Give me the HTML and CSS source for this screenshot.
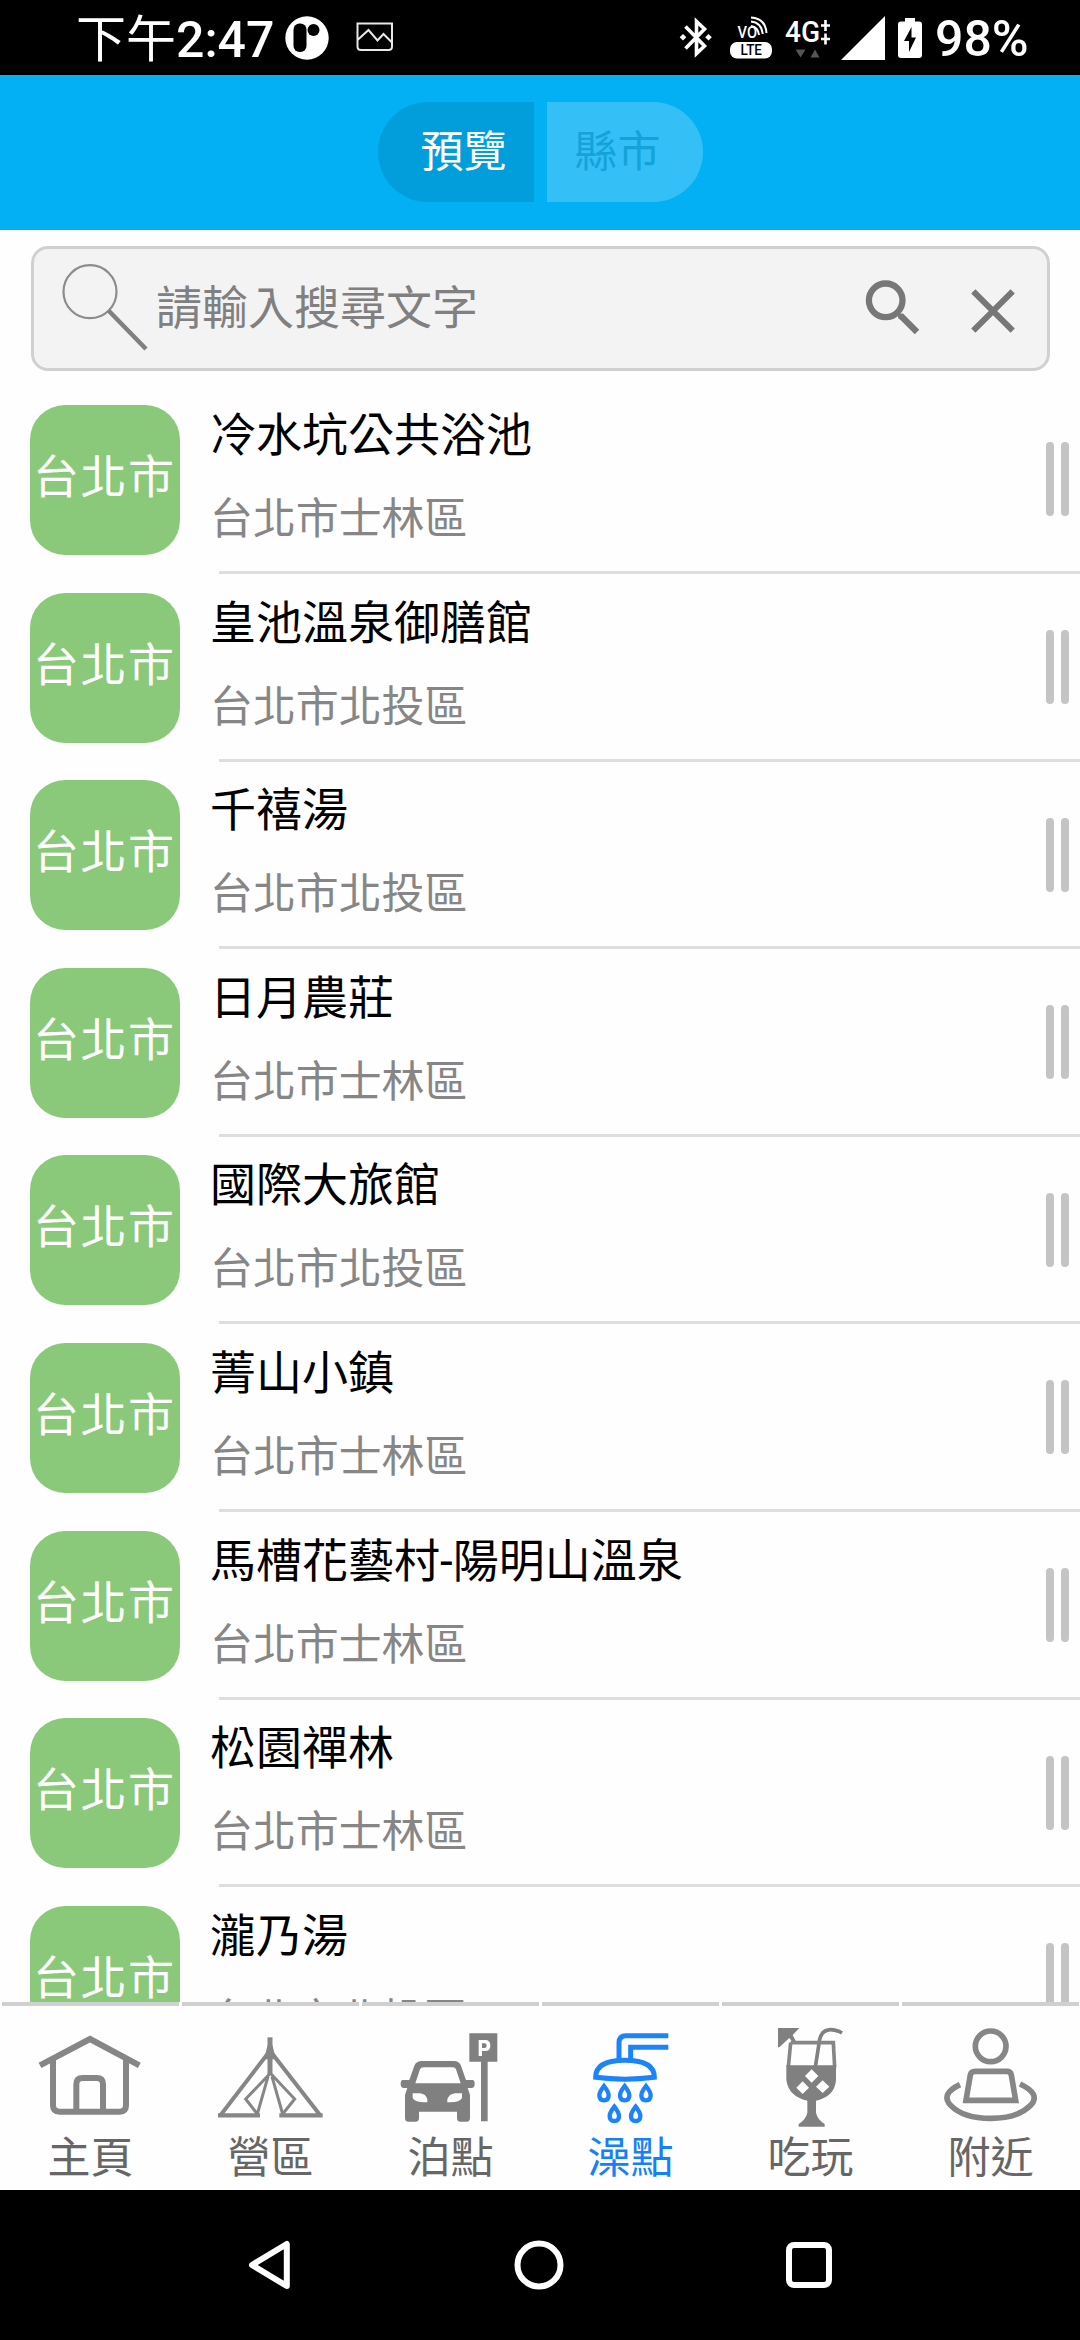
FILE: index.html
```html
<!DOCTYPE html>
<html lang="zh-Hant">
<head>
<meta charset="utf-8">
<title>澡點</title>
<link rel="stylesheet" href="styles.css">
</head>
<body>
<div class="screen">
  <div class="status">
    <span class="clock">下午<b>2:47</b></span>
    <svg class="st-app" width="44" height="46" viewBox="0 0 44 46"><circle cx="22" cy="23" r="21.700" fill="#fff"/><rect x="8.500" y="8.500" width="13" height="28.500" rx="6" fill="#000"/><circle cx="28.500" cy="15" r="6" fill="#000"/></svg>
    <svg class="st-pic" width="38" height="30" viewBox="0 0 38 30"><path d="M1.500 1.500H36V24.500Q36 28 32.500 28H5Q1.500 28 1.500 24.500ZM1.500 18L12.500 8L21.500 18.500L27.500 12L36 20.500" fill="none" stroke="#e8e8e8" stroke-width="2"/></svg>
    <svg class="st-bt" width="34" height="42" viewBox="0 0 34 42"><path d="M6.500 9.500L25.500 29L17.500 36.500V4.500L25.500 12L6.500 31.500" fill="none" stroke="#fff" stroke-width="3.600"/><path d="M4 17l3.300 3.300l-3.300 3.300l-3.300-3.300zM29.500 17l3.300 3.300l-3.300 3.300l-3.300-3.300z" fill="#fff"/></svg>
    <svg class="st-volte" width="42" height="44" viewBox="0 0 42 44"><text x="7.500" y="22.800" class="vo" textLength="19.500" lengthAdjust="spacingAndGlyphs">VO</text><path d="M21 11Q28 12 29 20M21 6.500Q31.500 7.500 32.800 19M21 2.500Q35.500 3.500 36.500 18" fill="none" stroke="#fff" stroke-width="2"/><rect y="27" width="42" height="16.500" rx="7" fill="#fff"/><text x="10.500" y="40" class="lte" textLength="21.500" lengthAdjust="spacingAndGlyphs">LTE</text></svg>
    <svg class="st-4g" width="46" height="42" viewBox="0 0 46 42"><text x="0" y="23.500" class="g4" textLength="35" lengthAdjust="spacingAndGlyphs">4G</text><path d="M40.500 2V13M36 7.500H45M40.500 15.500V26.500M36 21H45" stroke="#fff" stroke-width="2.600"/><path d="M10.500 31.500H20.500L15.500 39.500ZM25.500 39.500H34.500L30 31.500Z" fill="#555"/></svg>
    <svg class="st-sig" width="44" height="44" viewBox="0 0 44 44"><path d="M0 44L44 0V44Z" fill="#fff"/></svg>
    <svg class="st-bat" width="24" height="40" viewBox="0 0 24 40"><path d="M7 0H17V3.500H21Q24 3.500 24 6.500V37Q24 40 21 40H3Q0 40 0 37V6.500Q0 3.500 3 3.500H7Z" fill="#fff"/><path d="M13.500 9L6 23H11V34L18 19.500H13.500Z" fill="#000"/></svg>
    <b class="pct">98%</b>
  </div>

  <header class="header">
    <div class="seg seg-on">預覽</div>
    <div class="seg seg-off">縣市</div>
  </header>

  <main class="content">
    <div class="search">
      <svg class="lens" width="62" height="62" viewBox="0 0 62 62"><circle cx="28" cy="27.700" r="26.500" fill="none" stroke="#8c8c8c" stroke-width="2.200"/><path d="M46.500 46.500L84 85" stroke="#808080" stroke-width="4.500"/></svg>
      <span class="hint">請輸入搜尋文字</span>
      <svg class="find" width="56" height="58" viewBox="0 0 56 58"><circle cx="21.700" cy="21.300" r="16.800" fill="none" stroke="#777" stroke-width="6.300"/><path d="M36.500 36.500L53 53" stroke="#777" stroke-width="6.300"/><circle cx="37" cy="37.500" r="3" fill="#777"/></svg>
      <svg class="clear" width="44" height="44" viewBox="0 0 44 44"><path d="M2.300 2.300L41.700 41.700M41.700 2.300L2.300 41.700" stroke="#777" stroke-width="6"/></svg>
    </div>
    <div class="list">
      <div class="row"><div class="badge">台北市</div><div class="info"><div class="name">冷水坑公共浴池</div><div class="area">台北市士林區</div></div><div class="grip"></div></div>
      <div class="row"><div class="badge">台北市</div><div class="info"><div class="name">皇池溫泉御膳館</div><div class="area">台北市北投區</div></div><div class="grip"></div></div>
      <div class="row"><div class="badge">台北市</div><div class="info"><div class="name">千禧湯</div><div class="area">台北市北投區</div></div><div class="grip"></div></div>
      <div class="row"><div class="badge">台北市</div><div class="info"><div class="name">日月農莊</div><div class="area">台北市士林區</div></div><div class="grip"></div></div>
      <div class="row"><div class="badge">台北市</div><div class="info"><div class="name">國際大旅館</div><div class="area">台北市北投區</div></div><div class="grip"></div></div>
      <div class="row"><div class="badge">台北市</div><div class="info"><div class="name">菁山小鎮</div><div class="area">台北市士林區</div></div><div class="grip"></div></div>
      <div class="row"><div class="badge">台北市</div><div class="info"><div class="name">馬槽花藝村<span class="latin">-</span>陽明山溫泉</div><div class="area">台北市士林區</div></div><div class="grip"></div></div>
      <div class="row"><div class="badge">台北市</div><div class="info"><div class="name">松園禪林</div><div class="area">台北市士林區</div></div><div class="grip"></div></div>
      <div class="row"><div class="badge">台北市</div><div class="info"><div class="name">瀧乃湯</div><div class="area">台北市北投區</div></div><div class="grip"></div></div>
    </div>
  </main>

  <nav class="tabs">
    <div class="tab">
      <svg viewBox="0 78 540 348"><g fill="none" stroke="#868686" stroke-width="18"><path d="M120 256L270 177L418 256M159 240V376Q159 395 178 395H360Q378 395 378 376V240"/><path d="M229 395V313Q229 294 248 294H290Q309 294 309 313V395"/></g></svg>
      <span>主頁</span>
    </div>
    <div class="tab">
      <svg viewBox="540 78 540 348"><g fill="none" stroke="#868686"><path stroke-width="15" d="M810 172V285"/><path stroke-width="12" d="M810 212L662 405M810 212L960 405"/><path stroke-width="9" d="M808 283L737 357L772 402L804 290M814 283L884 357L848 402L816 290"/><path stroke-width="13" d="M654 406H780M838 406H968"/></g><path fill="#868686" d="M803 195H817L828 238H792Z"/></svg>
      <span>營區</span>
    </div>
    <div class="tab">
      <svg viewBox="0 78 540 348"><path fill="#808080" fill-rule="evenodd" d="M328 160H412V245H383V424H363V245H328ZM356 180V228H366V213H376Q391 213 391 197Q391 180 376 180ZM366 190H374Q380 190 380 197Q380 204 374 204H366Z"/><path fill="#808080" fill-rule="evenodd" d="M185 243H282Q297 243 303 257L318 300H338Q344 300 344 312Q344 324 334 324H323L330 345V414Q330 425 320 425H301Q291 425 291 414V395H177V414Q177 425 167 425H145Q135 425 135 414V345L142 324H132Q122 324 122 312Q122 300 128 300H148L163 257Q169 243 185 243ZM191 262Q182 262 180 268L166 310H302L288 268Q286 262 278 262ZM158 340V354Q166 367 193 367H202V358Q198 342 180 340ZM306 340V354Q298 367 272 367H262V358Q267 342 285 340Z"/></svg>
      <span>泊點</span>
    </div>
    <div class="tab tab-on">
      <svg viewBox="540 78 540 348"><g fill="none" stroke="#1c84fb" stroke-width="15"><path d="M925 167H798Q777 167 777 188V242M925 202H812V242"/><path d="M707 292Q707 241 795 241Q883 241 883 292Q795 303 707 292Z"/></g><g fill="none" stroke="#1c84fb" stroke-width="13"><path id="drop" d="M732 318Q718 336 718 346Q718 361 732 361Q746 361 746 346Q746 336 732 318Z"/><use href="#drop" x="62"/><use href="#drop" x="126"/><use href="#drop" x="31" y="62"/><use href="#drop" x="95" y="62"/></g></svg>
      <span>澡點</span>
    </div>
    <div class="tab">
      <svg viewBox="0 78 540 348"><path fill="#808080" d="M174 144H238L218 165L232 192H222L208 174L178 202H174Z"/><path fill="none" stroke="#808080" stroke-width="11" d="M285 268L299 178Q306 149 332 149Q350 149 366 159"/><path fill="none" stroke="#868686" stroke-width="11" d="M212 188H340L344 262M212 188L205 262"/><path fill="#808080" fill-rule="evenodd" d="M199 256H348V300Q344 350 288 362V398Q292 418 314 432V440H236V432Q258 418 262 398V362Q206 350 199 300ZM275 268L255 288L275 308L295 288ZM248 304L229 323L248 342L267 323ZM308 301L288 320L308 339L328 320Z"/></svg>
      <span>吃玩</span>
    </div>
    <div class="tab">
      <svg viewBox="540 78 540 348"><g fill="none" stroke="#868686" stroke-width="17"><circle cx="812" cy="199" r="46"/><path d="M766 274H860Q872 274 874 285L887 361H738L751 285Q753 274 766 274Z"/><path d="M720 314Q660 342 692 376Q730 415 812 415Q894 415 932 376Q964 342 900 312"/></g></svg>
      <span>附近</span>
    </div>
  </nav>

  <div class="sysnav">
    <svg width="44" height="50" viewBox="0 0 44 50"><path d="M38.800 4V46L4 25Z" fill="none" stroke="#fff" stroke-width="6" stroke-linejoin="round"/></svg>
    <svg width="50" height="50" viewBox="0 0 50 50"><circle cx="25" cy="25" r="21.500" fill="none" stroke="#fff" stroke-width="6"/></svg>
    <svg width="46" height="46" viewBox="0 0 46 46"><rect x="3" y="3" width="40" height="40" rx="5" fill="none" stroke="#fff" stroke-width="6"/></svg>
  </div>
</div>
</body>
</html>
```
FILE: styles.css
```css
* { box-sizing: border-box; }
body {
  margin: 0;
  background: #000;
  font-family: "Noto Sans CJK TC", sans-serif;
}
svg { display: block; flex: none; }
.screen {
  width: 1080px;
  height: 2340px;
  display: flex;
  flex-direction: column;
  overflow: hidden;
}

/* status bar */
.status {
  height: 75px;
  flex: none;
  display: flex;
  align-items: flex-start;
  background: #000;
  color: #fff;
}
.clock {
  width: 209px;
  margin-left: 76px;
  font-size: 50px;
  line-height: 70px;
  white-space: nowrap;
}
.status b {
  font-family: Roboto, "Noto Sans CJK TC", sans-serif;
  font-weight: 500;
}
.st-app { margin-top: 15px; }
.st-pic { margin: 22px 0 0 27px; }
.st-bt { margin: 17px 0 0 285px; }
.st-volte { margin: 15px 0 0 17px; }
.st-4g { margin: 18px 0 0 13px; }
.st-sig { margin: 16px 0 0 10px; }
.st-bat { margin: 18px 0 0 13px; }
.pct {
  margin: 4px 0 0 13px;
  font-size: 50px;
  line-height: 70px;
}
.vo { font: 500 16.500px Roboto, sans-serif; fill: #fff; }
.lte { font: 500 14px Roboto, sans-serif; fill: #000; }
.g4 { font: 500 30px Roboto, sans-serif; fill: #fff; }

/* header with the two-way switch */
.header {
  height: 155px;
  flex: none;
  display: flex;
  justify-content: center;
  gap: 13px;
  padding-top: 27px;
  background: #02b0f3;
}
.seg {
  width: 156px;
  height: 100px;
  font-size: 43px;
  line-height: 92px;
}
.seg-on {
  padding-left: 43px;
  border-radius: 54px 0 0 54px;
  background: #019edb;
  color: #fff;
}
.seg-off {
  padding-left: 28px;
  border-radius: 0 54px 54px 0;
  background: #34c0f6;
  color: #13a3d8;
}

/* search and list */
.content {
  height: 1772px;
  flex: none;
  display: flex;
  flex-direction: column;
  overflow: hidden;
  padding-top: 16px;
  background: #fefefe;
}
.search {
  height: 125px;
  flex: none;
  display: flex;
  margin: 0 30px 0 31px;
  border: 3px solid #d0d0d0;
  border-radius: 17px;
  background: #f3f3f3;
  color: #808080;
}
.lens { margin: 15px 0 0 28px; overflow: visible; }
.hint {
  width: 708px;
  margin-left: 32px;
  font-size: 46px;
  line-height: 110px;
}
.find { margin: 30px 0 0 0; }
.clear { margin: 40px 0 0 51px; }
.list { padding-top: 15.400px; }
.row {
  height: 187.600px;
  display: flex;
  padding-left: 30px;
}
.badge {
  width: 150px;
  height: 150px;
  flex: none;
  margin-top: 18.600px;
  padding-left: 3px;
  border-radius: 35px;
  background: #8ac97a;
  color: #fff;
  font-size: 46px;
  letter-spacing: 1.500px;
  line-height: 136px;
  white-space: nowrap;
}
.info {
  flex: 1;
  height: 100%;
  margin-left: 39px;
  padding-top: 14.600px;
  border-bottom: 3px solid #dedede;
}
.name {
  font-size: 46px;
  line-height: 60px;
  margin-left: -9px;
  color: #000;
}
.latin {
  font-family: Roboto, sans-serif;
  line-height: 1;
}
.area {
  margin: 24px 0 0 -9px;
  font-size: 42.900px;
  line-height: 60px;
  color: #868686;
}
.grip {
  width: 34px;
  height: 100%;
  padding-top: 56px;
  border-bottom: 3px solid #dedede;
}
.grip::before,
.grip::after {
  content: "";
  float: left;
  width: 8px;
  height: 74px;
  margin-right: 7px;
  border-radius: 4px;
  background: #c4c4c4;
}
.grip::after { margin-right: 0; }

/* bottom tabs */
.tabs {
  height: 188px;
  flex: none;
  display: grid;
  grid-template-columns: repeat(6, 180px);
  background: #fefefe;
}
.tab {
  margin: 0 1px 0 2px;
  border-top: 4px solid #d0d0d0;
  color: #666;
  font-size: 43px;
  text-align: center;
}
.tab svg {
  width: 180px;
  height: 116px;
  margin-left: -2px;
  overflow: visible;
}
.tab span {
  display: block;
  height: 60px;
  margin-top: 2px;
  line-height: 60px;
}
.tab-on { color: #1480fb; }

/* system navigation */
.sysnav {
  height: 150px;
  flex: none;
  display: flex;
  align-items: center;
  justify-content: space-between;
  padding: 0 248px;
  background: #000;
}
```
